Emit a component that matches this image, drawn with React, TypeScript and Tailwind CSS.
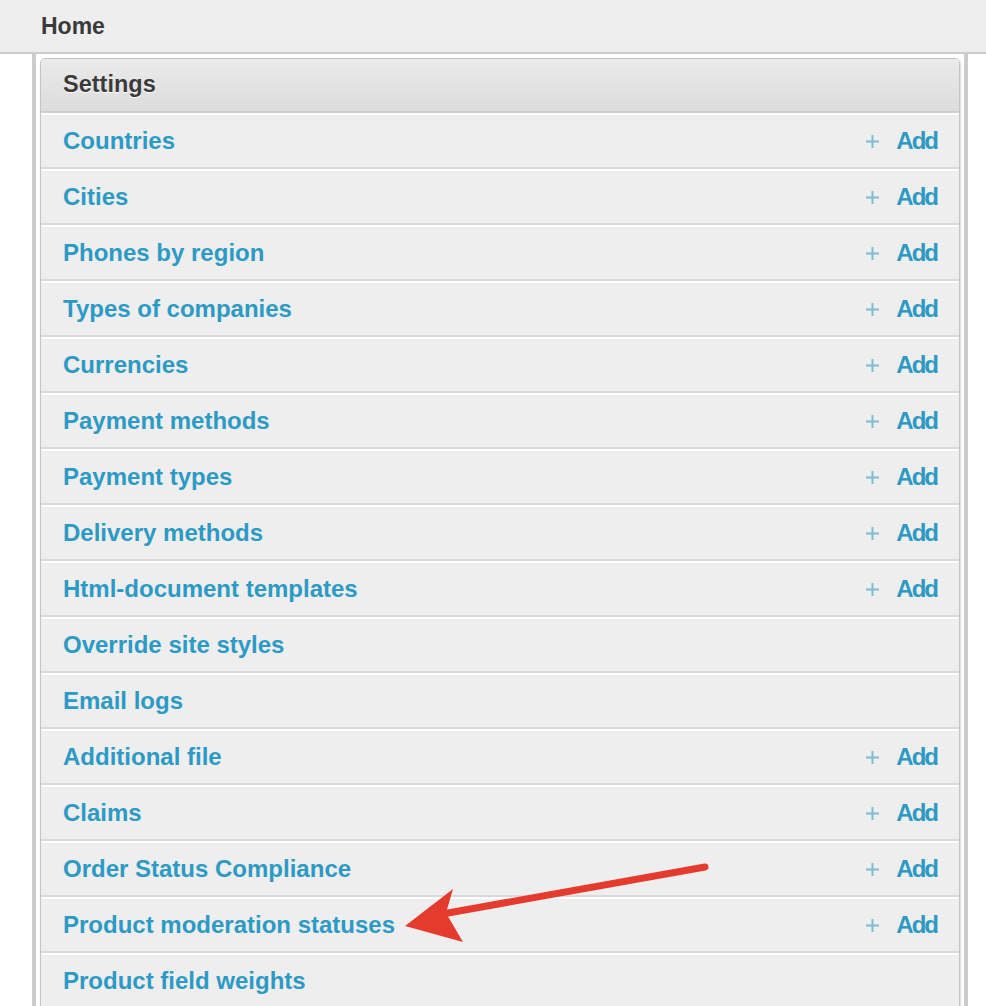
import React from 'react';

interface SettingRow {
    label: string;
    canAdd: boolean;
}

const rows: SettingRow[] = [
    { label: 'Countries', canAdd: true },
    { label: 'Cities', canAdd: true },
    { label: 'Phones by region', canAdd: true },
    { label: 'Types of companies', canAdd: true },
    { label: 'Currencies', canAdd: true },
    { label: 'Payment methods', canAdd: true },
    { label: 'Payment types', canAdd: true },
    { label: 'Delivery methods', canAdd: true },
    { label: 'Html-document templates', canAdd: true },
    { label: 'Override site styles', canAdd: false },
    { label: 'Email logs', canAdd: false },
    { label: 'Additional file', canAdd: true },
    { label: 'Claims', canAdd: true },
    { label: 'Order Status Compliance', canAdd: true },
    { label: 'Product moderation statuses', canAdd: true },
    { label: 'Product field weights', canAdd: false },
];

const PlusIcon: React.FC = () => (
    <svg width="15" height="15" viewBox="0 0 15 15" className="shrink-0">
        <path d="M7.5 1v13M1 7.5h13" stroke="#7fbcd6" strokeWidth="2" />
    </svg>
);

const Row: React.FC<{ row: SettingRow }> = ({ row }) => {
    return (
        <div className="flex h-[56px] items-center justify-between border-t-2 border-b-2 border-t-white border-b-[#d9d9d9] bg-[#eeeeee] pl-[22px] pr-[22px]">
            <a href="#" className="text-[24px] font-bold text-[#2c9ac4]">
                {row.label}
            </a>
            {row.canAdd && (
                <a href="#" className="flex items-center gap-[16px] text-[#2c9ac4]">
                    <PlusIcon />
                    <span className="text-[24px] font-bold tracking-[-2px]">Add</span>
                </a>
            )}
        </div>
    );
};

const App: React.FC = () => {
    return (
        <div className="relative h-[1006px] w-[986px] overflow-hidden bg-white font-['Liberation_Sans',Arial,sans-serif]">
            <div className="flex h-[54px] items-center border-b-2 border-[#cccccc] bg-[#eeeeee] pl-[41px]">
                <span className="text-[23px] font-bold text-[#3a3a3a]">Home</span>
            </div>

            <div className="ml-[32px] h-full w-[936px] border-x-4 border-[#cccccc] px-[4px] pt-[4px]">
                <div className="overflow-hidden rounded-[5px] border border-[#c4c4c4] shadow-[1px_1px_2px_rgba(0,0,0,0.15)]">
                    <div className="flex h-[54px] items-center border-b-2 border-[#cdcdcd] bg-gradient-to-b from-[#ebebeb] to-[#dcdcdc] pl-[22px]">
                        <span className="text-[23.5px] font-bold text-[#3a3a3a] [text-shadow:0_1px_0_#fff]">Settings</span>
                    </div>
                    {rows.map((row) => (
                        <Row key={row.label} row={row} />
                    ))}
                </div>
            </div>

            <svg className="pointer-events-none absolute left-0 top-0" width="986" height="1006">
                <line x1="705" y1="867" x2="448" y2="913" stroke="#e53b2f" strokeWidth="7" strokeLinecap="round" />
                <polygon points="405,926 453,889 446,913 463,942" fill="#e53b2f" />
            </svg>
        </div>
    );
};

export default App;
